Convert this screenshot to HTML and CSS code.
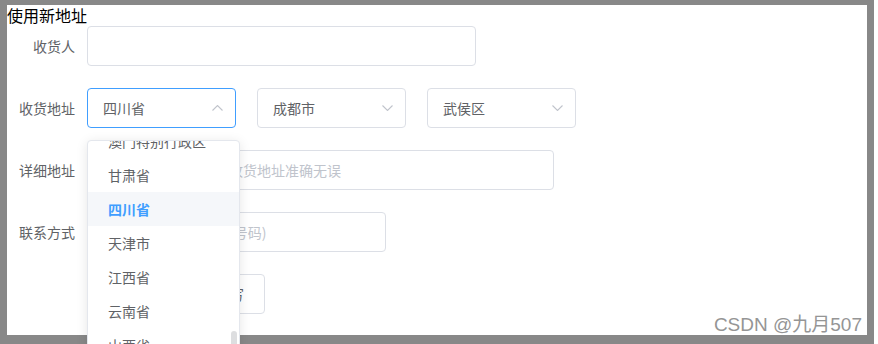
FILE: index.html
```html
<!DOCTYPE html>
<html lang="zh-CN">
<head>
    <meta charset="UTF-8">
    <meta name="viewport" content="width=device-width, initial-scale=1.0">
    <title>使用新地址</title>
    <link rel="stylesheet" href="styles.css">
</head>
<body>
    <div class="frame">
        <div class="panel">
            <div class="title">使用新地址</div>

            <form class="address-form">
                <div class="form-item">
                    <label class="form-label">收货人</label>
                    <div class="input w-name"></div>
                </div>

                <div class="form-item">
                    <label class="form-label">收货地址</label>
                    <div class="select-row">
                        <div class="select is-open">
                            <span class="select-value">四川省</span>
                            <svg class="chevron" width="11" height="6" viewBox="0 0 11 6"><polyline points="0.5,5.5 5.5,0.5 10.5,5.5" fill="none" stroke="#c0c4cc" stroke-width="1.1"/></svg>

                            <div class="dropdown">
                                <div class="dropdown-wrap">
                                    <ul class="dropdown-list">
                                        <li>澳门特别行政区</li>
                                        <li>甘肃省</li>
                                        <li class="selected">四川省</li>
                                        <li>天津市</li>
                                        <li>江西省</li>
                                        <li>云南省</li>
                                        <li>山西省</li>
                                    </ul>
                                </div>
                                <div class="scroll-thumb"></div>
                            </div>
                        </div>
                        <div class="select">
                            <span class="select-value">成都市</span>
                            <svg class="chevron" width="11" height="6" viewBox="0 0 11 6"><polyline points="0.5,0.5 5.5,5.5 10.5,0.5" fill="none" stroke="#c0c4cc" stroke-width="1.1"/></svg>
                        </div>
                        <div class="select">
                            <span class="select-value">武侯区</span>
                            <svg class="chevron" width="11" height="6" viewBox="0 0 11 6"><polyline points="0.5,0.5 5.5,5.5 10.5,0.5" fill="none" stroke="#c0c4cc" stroke-width="1.1"/></svg>
                        </div>
                    </div>
                </div>

                <div class="form-item">
                    <label class="form-label">详细地址</label>
                    <div class="input w-detail"><span class="placeholder">请输入地址，并确保收货地址准确无误</span></div>
                </div>

                <div class="form-item">
                    <label class="form-label">联系方式</label>
                    <div class="input w-phone"><span class="placeholder">请输入联系方式(手机号码)</span></div>
                </div>

                <div class="form-item">
                    <label class="form-label"></label>
                    <div class="buttons">
                        <button type="button" class="btn btn-primary">提交</button>
                        <button type="button" class="btn">重新填写</button>
                    </div>
                </div>
            </form>
        </div>
    </div>

    <div class="watermark">CSDN @九月507</div>
</body>
</html>
```

FILE: styles.css
```css
html, body {
    margin: 0;
    height: 100%;
    overflow: hidden;
}
body {
    background: #fff;
    font-family: "Noto Sans CJK SC", "Liberation Sans", sans-serif;
    position: relative;
}
.frame {
    width: 860px;
    height: 344px;
    background: #888;
    padding: 5px 7px 0 7px;
}
.panel {
    background: #fff;
    height: 330px;
}
.title {
    font-size: 16px;
    line-height: 21px;
    color: #000;
}

/* form */
.address-form {
    margin: 0;
}
.form-item {
    display: flex;
    height: 40px;
    margin-bottom: 22px;
}
.form-label {
    width: 80px;
    box-sizing: border-box;
    padding-right: 12px;
    text-align: right;
    font-size: 14px;
    line-height: 40px;
    color: #606266;
}
.input {
    box-sizing: border-box;
    height: 40px;
    border: 1px solid #dcdfe6;
    border-radius: 4px;
    padding: 0 15px;
    font-size: 14px;
    line-height: 38px;
    white-space: nowrap;
    overflow: hidden;
}
.placeholder {
    color: #c0c4cc;
}
.w-name { width: 389px; }
.w-detail { width: 467px; }
.w-phone { width: 299px; }

/* selects */
.select-row {
    display: flex;
    gap: 21px;
}
.select {
    position: relative;
    box-sizing: border-box;
    width: 149px;
    height: 40px;
    border: 1px solid #dcdfe6;
    border-radius: 4px;
    padding: 0 12px 0 15px;
    display: flex;
    align-items: center;
    justify-content: space-between;
    font-size: 14px;
    color: #606266;
}
.select.is-open {
    border-color: #409eff;
}
.chevron {
    display: block;
}

/* dropdown */
.dropdown {
    position: absolute;
    top: 51px;
    left: -1px;
    width: 153px;
    height: 230px;
    box-sizing: border-box;
    background: #fff;
    border: 1px solid #e4e7ed;
    border-radius: 4px;
    box-shadow: 0 2px 12px 0 rgba(0, 0, 0, 0.1);
    z-index: 10;
}
.dropdown-wrap {
    height: 100%;
    overflow: hidden;
}
.dropdown-list {
    list-style: none;
    margin: -17px 0 0;
    padding: 0;
}
.dropdown-list li {
    height: 34px;
    line-height: 34px;
    padding: 0 20px;
    font-size: 14px;
    color: #606266;
    white-space: nowrap;
}
.dropdown-list li.selected {
    background: #f5f7fa;
    color: #409eff;
    font-weight: bold;
}
.scroll-thumb {
    position: absolute;
    right: 2px;
    top: 190px;
    width: 6px;
    height: 60px;
    border-radius: 3px;
    background: rgba(144, 147, 153, 0.3);
}

/* buttons */
.buttons {
    display: flex;
    gap: 10px;
}
.btn {
    box-sizing: border-box;
    height: 40px;
    padding: 0 20px;
    border: 1px solid #dcdfe6;
    border-radius: 4px;
    background: #fff;
    font-family: inherit;
    font-size: 14px;
    color: #606266;
}
.btn-primary {
    width: 70px;
    background: #409eff;
    border-color: #409eff;
    color: #fff;
}

.watermark {
    position: absolute;
    right: 16px;
    bottom: 8px;
    font-family: "Liberation Sans", "Noto Sans CJK SC", sans-serif;
    font-size: 19px;
    line-height: 22px;
    color: #959595;
    text-shadow: 0 0 1px #fff, 0 0 1px #fff;
}
```
